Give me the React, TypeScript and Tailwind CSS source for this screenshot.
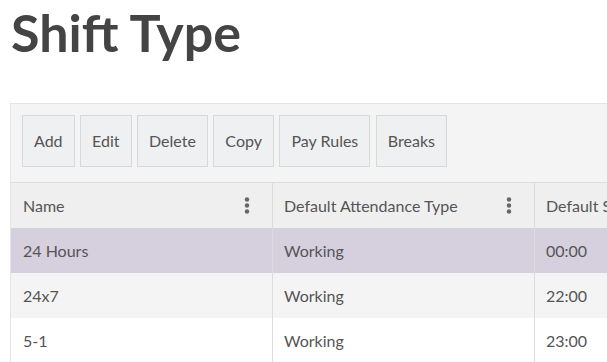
import React from "react";

const buttons = ["Add", "Edit", "Delete", "Copy", "Pay Rules", "Breaks"];

const rows = [
  { name: "24 Hours", type: "Working", start: "00:00", bg: "bg-[#d6d0de]" },
  { name: "24x7", type: "Working", start: "22:00", bg: "bg-[#f4f4f4]" },
  { name: "5-1", type: "Working", start: "23:00", bg: "bg-white" },
];

function Kebab() {
  return (
    <svg width="6" height="17" viewBox="0 0 6 17" className="shrink-0">
      <circle cx="3" cy="2.5" r="2.2" fill="#666" />
      <circle cx="3" cy="8.5" r="2.2" fill="#666" />
      <circle cx="3" cy="14.5" r="2.2" fill="#666" />
    </svg>
  );
}

export default function App() {
  return (
    <div className="w-[607px] h-[362px] overflow-hidden bg-white font-['Lato',sans-serif] text-[#555]">
      <div className="h-[103px] pl-[11px] pt-[2px]">
        <h1 className="text-[52px] font-bold leading-[60px] text-[#444]">Shift Type</h1>
      </div>
      <div className="ml-[10px] w-[800px] border-t border-l border-[#e4e4e4] bg-[#f4f4f4]">
        <div className="flex gap-[5.5px] pl-[11px] pt-[11px] pb-[15px]">
          {buttons.map((b) => (
            <div
              key={b}
              className="h-[52px] flex items-center px-[11px] border border-[#d8d8d8] bg-[#eef0f2] text-[16px] text-[#555]"
            >
              {b}
            </div>
          ))}
        </div>
        <div className="border-t border-[#dcdcdc]">
          <div className="flex h-[45px] bg-[#efefef] text-[16px] text-[#555]">
            <div className="w-[262px] flex items-center justify-between pl-[12px] pr-[22px] border-r border-[#dcdcdc]">
              <span>Name</span>
              <Kebab />
            </div>
            <div className="w-[262px] flex items-center justify-between pl-[11px] pr-[22px] border-r border-[#dcdcdc]">
              <span>Default Attendance Type</span>
              <Kebab />
            </div>
            <div className="flex-1 flex items-center pl-[11px]">
              <span>Default Start Time</span>
            </div>
          </div>
          {rows.map((r) => (
            <div key={r.name} className={`flex h-[45px] ${r.bg} text-[16px] text-[#555]`}>
              <div className="w-[262px] flex items-center pl-[12px] border-r border-[#dcdcdc]">{r.name}</div>
              <div className="w-[262px] flex items-center pl-[11px] border-r border-[#dcdcdc]">{r.type}</div>
              <div className="flex-1 flex items-center pl-[11px]">{r.start}</div>
            </div>
          ))}
        </div>
      </div>
    </div>
  );
}
